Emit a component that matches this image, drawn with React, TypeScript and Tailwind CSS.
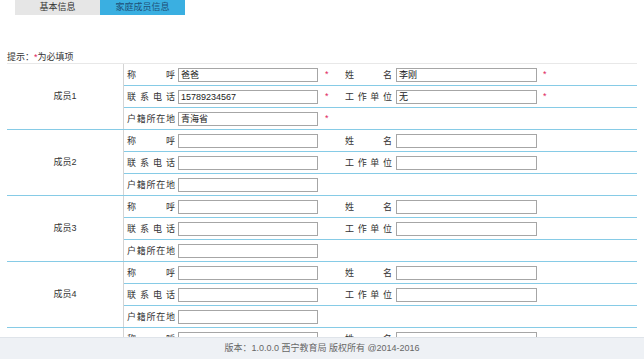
import React from "react";

interface Member {
    title: string
    name: string
    phone: string
    work: string
    home: string
    required: boolean
}

const members: Member[] = [
    { title: "爸爸", name: "李刚", phone: "15789234567", work: "无", home: "青海省", required: true },
    { title: "", name: "", phone: "", work: "", home: "", required: false },
    { title: "", name: "", phone: "", work: "", home: "", required: false },
    { title: "", name: "", phone: "", work: "", home: "", required: false },
    { title: "", name: "", phone: "", work: "", home: "", required: false },
]

const Star = ({ show, pad }: { show: boolean, pad: string }) => {
    return (
        <span className={"w-[27px] shrink-0 text-[9px] text-[#e0245e] " + pad}>
            {show ? "*" : ""}
        </span>
    )
}

const Box = ({ value, wide }: { value: string, wide?: boolean }) => {
    return (
        <input
            readOnly
            value={value}
            className={
                (wide ? "w-[141px]" : "w-[140px]") +
                " h-[14px] shrink-0 border border-[#a6a6a6] bg-white px-[2px] py-0 text-[9px] leading-[12px] text-[#222] outline-none"
            }
        />
    )
}

const Label = ({ text, w }: { text: string, w: string }) => {
    return (
        <span className={w + " shrink-0 text-[9px] leading-[12px] text-[#333] [text-align-last:justify]"}>
            {text}
        </span>
    )
}

export default function App() {
    return (
        <div
            className="flex h-[359px] w-[644px] flex-col overflow-hidden bg-white"
            style={{ fontFamily: '"Liberation Sans", "Noto Sans CJK SC", sans-serif' }}
        >
            <div className="min-h-0 flex-1 overflow-hidden">
                {/* tabs */}
                <div className="ml-[15px] flex h-[15px]">
                    <div className="flex w-[85px] items-center justify-center bg-[#e6e6e6] text-[9px] text-[#333]">
                        基本信息
                    </div>
                    <div className="flex w-[85px] items-center justify-center bg-[#3aafe1] text-[9px] text-[#1e4f78]">
                        家庭成员信息
                    </div>
                </div>

                <div className="ml-[7px] mt-[37px] h-[11px] text-[9px] leading-[11px] text-[#333]">
                    提示：<span className="text-[#e0245e]">*</span>为必填项
                </div>

                <div className="ml-[7px] w-[630px] border-t border-[#e8e8e8]">
                    {members.map((m, i) => {
                        return (
                            <div key={i} className="flex border-b border-[#86cbe6]">
                                <div className="flex w-[117px] shrink-0 items-center justify-center border-r border-[#d4d4d4] text-[9px] text-[#333]">
                                    成员{i + 1}
                                </div>
                                <div className="flex flex-1 flex-col">
                                    <div className="flex h-[22px] items-center border-b border-[#86cbe6] pl-[3px]">
                                        <Label text="称呼" w="w-[48px]" />
                                        <span className="ml-[3px]" />
                                        <Box value={m.title} />
                                        <Star show={m.required} pad="pl-[7px]" />
                                        <Label text="姓名" w="w-[47px]" />
                                        <span className="ml-[4px]" />
                                        <Box value={m.name} wide />
                                        <Star show={m.required} pad="pl-[6px]" />
                                    </div>
                                    <div className="flex h-[22px] items-center border-b border-[#86cbe6] pl-[3px]">
                                        <Label text="联系电话" w="w-[48px]" />
                                        <span className="ml-[3px]" />
                                        <Box value={m.phone} />
                                        <Star show={m.required} pad="pl-[7px]" />
                                        <Label text="工作单位" w="w-[47px]" />
                                        <span className="ml-[4px]" />
                                        <Box value={m.work} wide />
                                        <Star show={m.required} pad="pl-[6px]" />
                                    </div>
                                    <div className="flex h-[21px] items-center pl-[3px]">
                                        <Label text="户籍所在地" w="w-[48px]" />
                                        <span className="ml-[3px]" />
                                        <Box value={m.home} />
                                        <Star show={m.required} pad="pl-[7px]" />
                                    </div>
                                </div>
                            </div>
                        )
                    })}
                </div>
            </div>

            {/* footer */}
            <div className="h-[22px] shrink-0 border-t border-[#dfe4ea] bg-[#eef1f5] text-center text-[9px] leading-[21px] text-[#666]">
                版本：1.0.0.0 西宁教育局 版权所有 @2014-2016
            </div>
        </div>
    )
}
